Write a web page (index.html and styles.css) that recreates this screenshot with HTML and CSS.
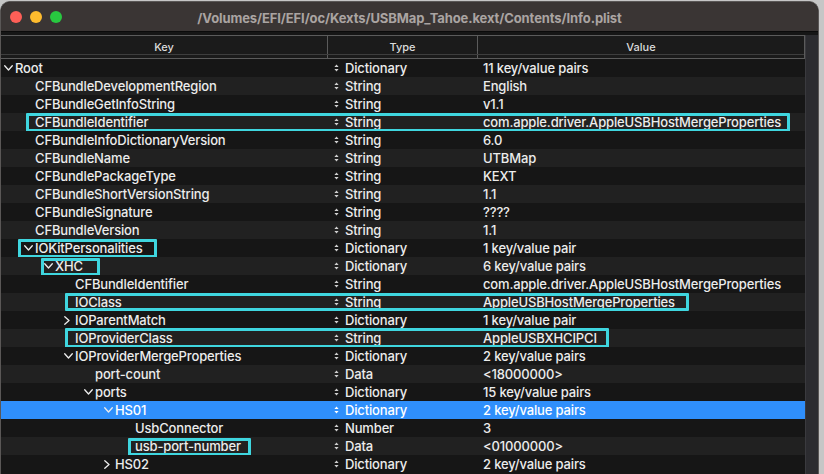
FILE: index.html
```html
<!DOCTYPE html>
<html>
<head>
<meta charset="utf-8">
<link rel="stylesheet" href="styles.css">
</head>
<body>
<div class="window">
  <div class="titlebar">
    <div class="lights">
      <span class="light red"></span>
      <span class="light yellow"></span>
      <span class="light green"></span>
    </div>
    <div class="title">/Volumes/EFI/EFI/oc/Kexts/USBMap_Tahoe.kext/Contents/Info.plist</div>
  </div>
  <div class="content">
    <div class="table">
      <div class="header">
        <div class="hcell hkey">Key</div>
        <div class="hcell htype">Type</div>
        <div class="hcell hvalue">Value</div>
      </div>
      <div class="rows">
        <div class="row even"><div class="key l0"><span class="disc"><svg width="9" height="6" viewBox="0 0 9 6"><polyline points="0.7,0.7 4.5,5 8.3,0.7"/></svg></span>Root</div><div class="type"><svg class="pop" width="5" height="8" viewBox="0 0 5 8"><path d="M2.5 0.5 L4.6 3 L0.4 3 Z M2.5 7.5 L4.6 5 L0.4 5 Z"/></svg>Dictionary</div><div class="value">11 key/value pairs</div></div>
        <div class="row odd"><div class="key l1"><span class="disc"></span>CFBundleDevelopmentRegion</div><div class="type"><svg class="pop" width="5" height="8" viewBox="0 0 5 8"><path d="M2.5 0.5 L4.6 3 L0.4 3 Z M2.5 7.5 L4.6 5 L0.4 5 Z"/></svg>String</div><div class="value">English</div></div>
        <div class="row even"><div class="key l1"><span class="disc"></span>CFBundleGetInfoString</div><div class="type"><svg class="pop" width="5" height="8" viewBox="0 0 5 8"><path d="M2.5 0.5 L4.6 3 L0.4 3 Z M2.5 7.5 L4.6 5 L0.4 5 Z"/></svg>String</div><div class="value">v1.1</div></div>
        <div class="row odd"><div class="key l1"><span class="disc"></span>CFBundleIdentifier</div><div class="type"><svg class="pop" width="5" height="8" viewBox="0 0 5 8"><path d="M2.5 0.5 L4.6 3 L0.4 3 Z M2.5 7.5 L4.6 5 L0.4 5 Z"/></svg>String</div><div class="value">com.apple.driver.AppleUSBHostMergeProperties</div><span class="hl hl-ident"></span></div>
        <div class="row even"><div class="key l1"><span class="disc"></span>CFBundleInfoDictionaryVersion</div><div class="type"><svg class="pop" width="5" height="8" viewBox="0 0 5 8"><path d="M2.5 0.5 L4.6 3 L0.4 3 Z M2.5 7.5 L4.6 5 L0.4 5 Z"/></svg>String</div><div class="value">6.0</div></div>
        <div class="row odd"><div class="key l1"><span class="disc"></span>CFBundleName</div><div class="type"><svg class="pop" width="5" height="8" viewBox="0 0 5 8"><path d="M2.5 0.5 L4.6 3 L0.4 3 Z M2.5 7.5 L4.6 5 L0.4 5 Z"/></svg>String</div><div class="value">UTBMap</div></div>
        <div class="row even"><div class="key l1"><span class="disc"></span>CFBundlePackageType</div><div class="type"><svg class="pop" width="5" height="8" viewBox="0 0 5 8"><path d="M2.5 0.5 L4.6 3 L0.4 3 Z M2.5 7.5 L4.6 5 L0.4 5 Z"/></svg>String</div><div class="value">KEXT</div></div>
        <div class="row odd"><div class="key l1"><span class="disc"></span>CFBundleShortVersionString</div><div class="type"><svg class="pop" width="5" height="8" viewBox="0 0 5 8"><path d="M2.5 0.5 L4.6 3 L0.4 3 Z M2.5 7.5 L4.6 5 L0.4 5 Z"/></svg>String</div><div class="value">1.1</div></div>
        <div class="row even"><div class="key l1"><span class="disc"></span>CFBundleSignature</div><div class="type"><svg class="pop" width="5" height="8" viewBox="0 0 5 8"><path d="M2.5 0.5 L4.6 3 L0.4 3 Z M2.5 7.5 L4.6 5 L0.4 5 Z"/></svg>String</div><div class="value">????</div></div>
        <div class="row odd"><div class="key l1"><span class="disc"></span>CFBundleVersion</div><div class="type"><svg class="pop" width="5" height="8" viewBox="0 0 5 8"><path d="M2.5 0.5 L4.6 3 L0.4 3 Z M2.5 7.5 L4.6 5 L0.4 5 Z"/></svg>String</div><div class="value">1.1</div></div>
        <div class="row even"><div class="key l1"><span class="disc"><svg width="9" height="6" viewBox="0 0 9 6"><polyline points="0.7,0.7 4.5,5 8.3,0.7"/></svg></span>IOKitPersonalities</div><div class="type"><svg class="pop" width="5" height="8" viewBox="0 0 5 8"><path d="M2.5 0.5 L4.6 3 L0.4 3 Z M2.5 7.5 L4.6 5 L0.4 5 Z"/></svg>Dictionary</div><div class="value">1 key/value pair</div><span class="hl hl-iokit"></span></div>
        <div class="row odd"><div class="key l2"><span class="disc"><svg width="9" height="6" viewBox="0 0 9 6"><polyline points="0.7,0.7 4.5,5 8.3,0.7"/></svg></span>XHC</div><div class="type"><svg class="pop" width="5" height="8" viewBox="0 0 5 8"><path d="M2.5 0.5 L4.6 3 L0.4 3 Z M2.5 7.5 L4.6 5 L0.4 5 Z"/></svg>Dictionary</div><div class="value">6 key/value pairs</div><span class="hl hl-xhc"></span></div>
        <div class="row even"><div class="key l3"><span class="disc"></span>CFBundleIdentifier</div><div class="type"><svg class="pop" width="5" height="8" viewBox="0 0 5 8"><path d="M2.5 0.5 L4.6 3 L0.4 3 Z M2.5 7.5 L4.6 5 L0.4 5 Z"/></svg>String</div><div class="value">com.apple.driver.AppleUSBHostMergeProperties</div></div>
        <div class="row odd"><div class="key l3"><span class="disc"></span>IOClass</div><div class="type"><svg class="pop" width="5" height="8" viewBox="0 0 5 8"><path d="M2.5 0.5 L4.6 3 L0.4 3 Z M2.5 7.5 L4.6 5 L0.4 5 Z"/></svg>String</div><div class="value">AppleUSBHostMergeProperties</div><span class="hl hl-ioclass"></span></div>
        <div class="row even"><div class="key l3"><span class="disc"><svg width="6" height="9" viewBox="0 0 6 9"><polyline points="0.8,0.7 5,4.5 0.8,8.3"/></svg></span>IOParentMatch</div><div class="type"><svg class="pop" width="5" height="8" viewBox="0 0 5 8"><path d="M2.5 0.5 L4.6 3 L0.4 3 Z M2.5 7.5 L4.6 5 L0.4 5 Z"/></svg>Dictionary</div><div class="value">1 key/value pair</div></div>
        <div class="row odd"><div class="key l3"><span class="disc"></span>IOProviderClass</div><div class="type"><svg class="pop" width="5" height="8" viewBox="0 0 5 8"><path d="M2.5 0.5 L4.6 3 L0.4 3 Z M2.5 7.5 L4.6 5 L0.4 5 Z"/></svg>String</div><div class="value">AppleUSBXHCIPCI</div><span class="hl hl-provider"></span></div>
        <div class="row even"><div class="key l3"><span class="disc"><svg width="9" height="6" viewBox="0 0 9 6"><polyline points="0.7,0.7 4.5,5 8.3,0.7"/></svg></span>IOProviderMergeProperties</div><div class="type"><svg class="pop" width="5" height="8" viewBox="0 0 5 8"><path d="M2.5 0.5 L4.6 3 L0.4 3 Z M2.5 7.5 L4.6 5 L0.4 5 Z"/></svg>Dictionary</div><div class="value">2 key/value pairs</div></div>
        <div class="row odd"><div class="key l4"><span class="disc"></span>port-count</div><div class="type"><svg class="pop" width="5" height="8" viewBox="0 0 5 8"><path d="M2.5 0.5 L4.6 3 L0.4 3 Z M2.5 7.5 L4.6 5 L0.4 5 Z"/></svg>Data</div><div class="value">&lt;18000000&gt;</div></div>
        <div class="row even"><div class="key l4"><span class="disc"><svg width="9" height="6" viewBox="0 0 9 6"><polyline points="0.7,0.7 4.5,5 8.3,0.7"/></svg></span>ports</div><div class="type"><svg class="pop" width="5" height="8" viewBox="0 0 5 8"><path d="M2.5 0.5 L4.6 3 L0.4 3 Z M2.5 7.5 L4.6 5 L0.4 5 Z"/></svg>Dictionary</div><div class="value">15 key/value pairs</div></div>
        <div class="row selected"><div class="key l5"><span class="disc"><svg width="9" height="6" viewBox="0 0 9 6"><polyline points="0.7,0.7 4.5,5 8.3,0.7"/></svg></span>HS01</div><div class="type"><svg class="pop" width="5" height="8" viewBox="0 0 5 8"><path d="M2.5 0.5 L4.6 3 L0.4 3 Z M2.5 7.5 L4.6 5 L0.4 5 Z"/></svg>Dictionary</div><div class="value">2 key/value pairs</div></div>
        <div class="row even"><div class="key l6"><span class="disc"></span>UsbConnector</div><div class="type"><svg class="pop" width="5" height="8" viewBox="0 0 5 8"><path d="M2.5 0.5 L4.6 3 L0.4 3 Z M2.5 7.5 L4.6 5 L0.4 5 Z"/></svg>Number</div><div class="value">3</div></div>
        <div class="row odd"><div class="key l6"><span class="disc"></span>usb-port-number</div><div class="type"><svg class="pop" width="5" height="8" viewBox="0 0 5 8"><path d="M2.5 0.5 L4.6 3 L0.4 3 Z M2.5 7.5 L4.6 5 L0.4 5 Z"/></svg>Data</div><div class="value">&lt;01000000&gt;</div><span class="hl hl-usbport"></span></div>
        <div class="row even"><div class="key l5"><span class="disc"><svg width="6" height="9" viewBox="0 0 6 9"><polyline points="0.8,0.7 5,4.5 0.8,8.3"/></svg></span>HS02</div><div class="type"><svg class="pop" width="5" height="8" viewBox="0 0 5 8"><path d="M2.5 0.5 L4.6 3 L0.4 3 Z M2.5 7.5 L4.6 5 L0.4 5 Z"/></svg>Dictionary</div><div class="value">2 key/value pairs</div></div>
      </div>
    </div>
    <div class="scrolltrack"></div>
  </div>
</div>
</body>
</html>
```

FILE: styles.css
```css
* { box-sizing: border-box; }
html, body {
  margin: 0;
  padding: 0;
  height: 100%;
  overflow: hidden;
}
body {
  background: #c6c6c6;
  font-family: Inter, "Noto Sans", "Liberation Sans", sans-serif;
  padding-top: 1px;
}
.window {
  width: 819px;
  height: 480px;
  background: #161616;
  border: 1px solid #5a5756;
  border-bottom: none;
  border-radius: 10px 10px 0 0;
  overflow: hidden;
}
.titlebar {
  position: relative;
  height: 30px;
  background: #3a3534;
  border-bottom: 1px solid #0b0b0b;
  display: flex;
  align-items: center;
  justify-content: center;
  padding-top: 2px;
}
.lights {
  position: absolute;
  left: 9px;
  top: 9px;
  display: flex;
  gap: 8px;
}
.light {
  width: 12px;
  height: 12px;
  border-radius: 50%;
  display: block;
}
.red { background: #fe5f57; }
.yellow { background: #febc2e; }
.green { background: #28c840; }
.title {
  color: #aaa4a2;
  font-size: 13px;
  font-weight: 700;
  letter-spacing: -0.1px;
}
.content {
  display: flex;
  padding-top: 3px;
  background: #161616;
}
.table {
  width: 804px;
}
.header {
  position: relative;
  display: flex;
  height: 24px;
  border: 1px solid #5b5b5b;
  border-left: none;
  background: #1b1b1b;
}
.header::after {
  content: "";
  position: absolute;
  left: 0;
  right: 0;
  bottom: 3px;
  height: 1px;
  background: #3e3e3e;
}
.hcell {
  display: flex;
  align-items: center;
  justify-content: center;
  color: #dcdcdc;
  font-size: 11px;
  font-weight: 500;
  padding-bottom: 1px;
}
.hkey { width: 327px; border-right: 1px solid #5b5b5b; }
.htype { width: 150px; border-right: 1px solid #5b5b5b; }
.hvalue { flex: 1; }
.rows {
  display: flex;
  flex-direction: column;
}
.row {
  position: relative;
  display: flex;
  height: 18px;
  line-height: 18px;
  font-size: 13px;
  font-weight: 500;
  letter-spacing: -0.15px;
  color: #ececec;
  white-space: nowrap;
}
.row.even { background: #161616; }
.row.odd { background: #212121; }
.row.selected { background: #2f8ffb; color: #ffffff; }
.key {
  width: 328px;
  display: flex;
  align-items: center;
}
.l0 { padding-left: 3px; }
.l1 { padding-left: 23px; }
.l2 { padding-left: 43px; }
.l3 { padding-left: 63px; }
.l4 { padding-left: 83px; }
.l5 { padding-left: 103px; }
.l6 { padding-left: 123px; }
.disc {
  width: 11px;
  height: 18px;
  display: flex;
  align-items: center;
  flex-shrink: 0;
}
.disc svg polyline {
  fill: none;
  stroke: #ececec;
  stroke-width: 1.3;
  stroke-linecap: round;
  stroke-linejoin: round;
}
.type {
  width: 150px;
  display: flex;
  align-items: center;
  padding-left: 5px;
}
.pop {
  margin-right: 6px;
  flex-shrink: 0;
}
.pop path { fill: #cfcfcf; }
.selected .pop path { fill: #ffffff; }
.value {
  flex: 1;
  padding-left: 4px;
}
.hl {
  position: absolute;
  border: 3px solid #3fd6df;
  border-radius: 1px;
  pointer-events: none;
}
.hl-ident { left: 25px; width: 764px; top: 0; height: 19px; }
.hl-iokit { left: 17px; width: 139px; top: 0; height: 19px; }
.hl-xhc { left: 40px; width: 59px; top: 1px; height: 18px; }
.hl-ioclass { left: 64px; width: 624px; top: 0; height: 18px; }
.hl-provider { left: 64px; width: 544px; top: -1px; height: 20px; }
.hl-usbport { left: 127px; width: 123px; top: 1px; height: 18px; }
.scrolltrack {
  width: 13px;
  background: #2c2c30;
  border-left: 1px solid #3a3a3e;
  height: 460px;
}
```
